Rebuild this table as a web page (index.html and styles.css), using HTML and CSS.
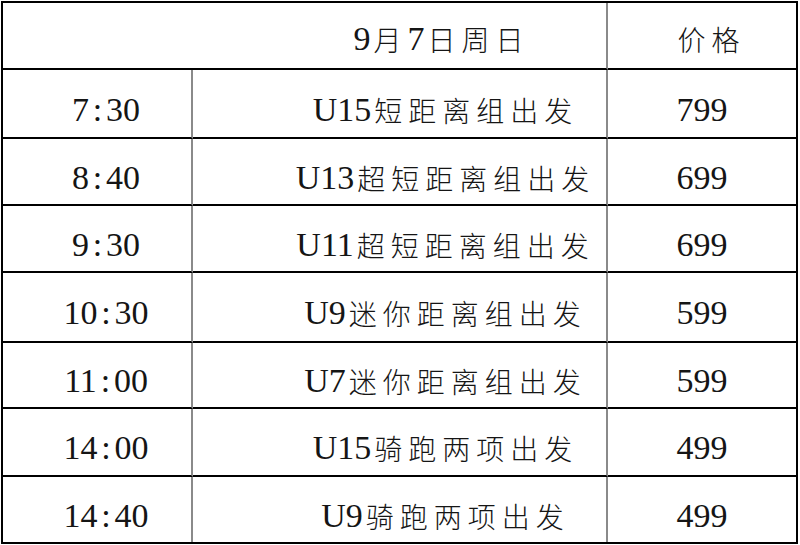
FILE: index.html
```html
<!DOCTYPE html>
<html lang="zh">
<head>
<meta charset="utf-8">
<title>9月7日周日</title>
<link rel="stylesheet" href="styles.css">
</head>
<body>
<div class="table">
  <div class="cell head-date">9<span class="cjk">月</span>7<span class="cjk">日周日</span></div>
  <div class="cell head-price"><span class="cjk">价格</span></div>

  <div class="cell time">7<span class="colon">:</span>30</div>
  <div class="cell event">U15<span class="cjk">短距离组出发</span></div>
  <div class="cell price">799</div>

  <div class="cell time">8<span class="colon">:</span>40</div>
  <div class="cell event">U13<span class="cjk">超短距离组出发</span></div>
  <div class="cell price">699</div>

  <div class="cell time">9<span class="colon">:</span>30</div>
  <div class="cell event">U11<span class="cjk">超短距离组出发</span></div>
  <div class="cell price">699</div>

  <div class="cell time">10<span class="colon">:</span>30</div>
  <div class="cell event">U9<span class="cjk">迷你距离组出发</span></div>
  <div class="cell price">599</div>

  <div class="cell time">11<span class="colon">:</span>00</div>
  <div class="cell event">U7<span class="cjk">迷你距离组出发</span></div>
  <div class="cell price">599</div>

  <div class="cell time">14<span class="colon">:</span>00</div>
  <div class="cell event">U15<span class="cjk">骑跑两项出发</span></div>
  <div class="cell price">499</div>

  <div class="cell time last">14<span class="colon">:</span>40</div>
  <div class="cell event last">U9<span class="cjk">骑跑两项出发</span></div>
  <div class="cell price last">499</div>
</div>
</body>
</html>
```

FILE: styles.css
```css
html, body {
  margin: 0;
  padding: 0;
  background: #fff;
}

.table {
  box-sizing: border-box;
  width: 797px;
  height: 543px;
  margin: 1px 0 0 1px;
  border: 2px solid #000;
  display: grid;
  grid-template-columns: 190px 415px 1fr;
  grid-template-rows: 67px 69px 67px 67px 70px 66px 68px 65px;
  font-family: "Liberation Serif", "Noto Sans CJK SC", serif;
  font-size: 34px;
  color: #151515;
}

.cell {
  box-sizing: border-box;
  display: flex;
  align-items: center;
  justify-content: center;
  border-bottom: 2px solid #000;
  padding-top: 12px;
  white-space: nowrap;
  line-height: 1;
}

.cell.last {
  border-bottom: none;
}

.head-date {
  grid-column: span 2;
  border-right: 2px solid #8a8a8a;
  padding-left: 274px;
  padding-top: 6px;
}

.head-price {
  padding-left: 16px;
  padding-top: 6px;
}

.time {
  border-right: 2px solid #8a8a8a;
  padding-left: 18px;
}

.event {
  border-right: 2px solid #8a8a8a;
  padding-left: 92px;
}

.price {
  padding-left: 0;
}

.cjk {
  font-family: "Noto Sans CJK SC", sans-serif;
  font-weight: 300;
  font-size: 28px;
  letter-spacing: 6px;
  padding-left: 3px;
}

.colon {
  display: inline-block;
  width: 17px;
  text-align: center;
}
```
